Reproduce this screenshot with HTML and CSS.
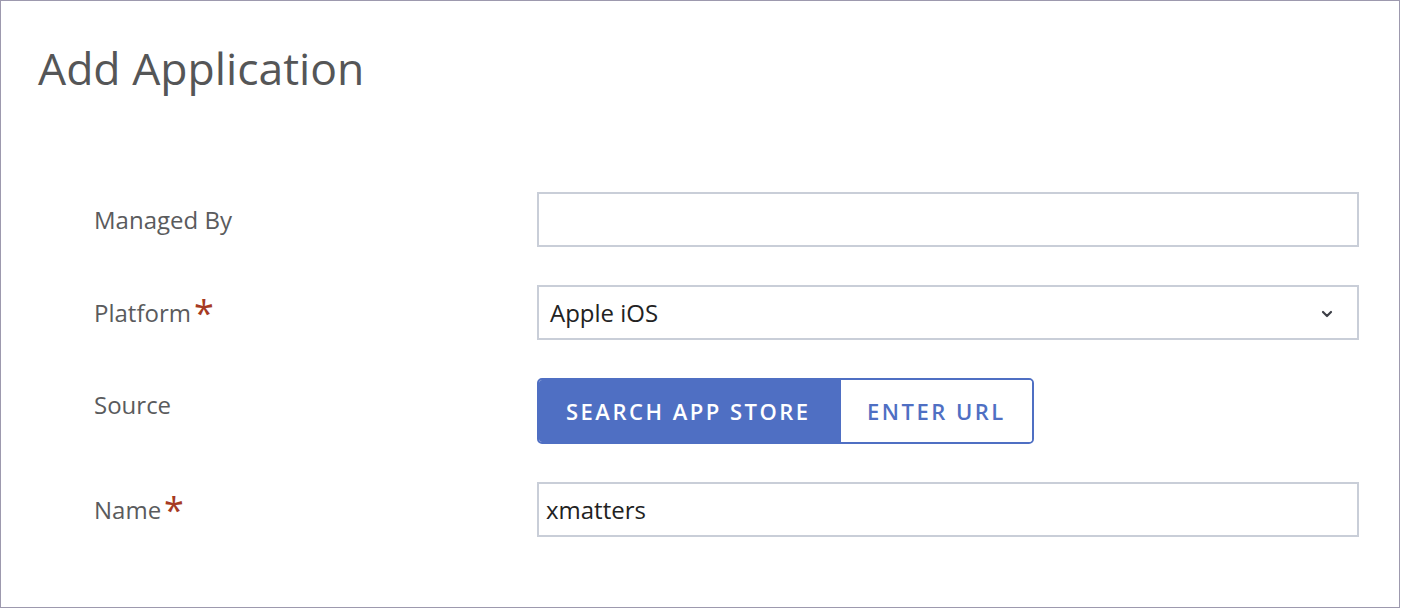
FILE: index.html
```html
<!DOCTYPE html>
<html>
<head>
<meta charset="utf-8">
<link rel="stylesheet" href="styles.css">
</head>
<body>
<div class="frame">
  <h1 class="title">Add Application</h1>
  <form class="form">
    <div class="row">
      <label class="label">Managed By</label>
      <div class="field"><div class="input"></div></div>
    </div>
    <div class="row">
      <label class="label">Platform<span class="req">*</span></label>
      <div class="field">
        <div class="input select">
          <span class="value">Apple iOS</span>
          <svg class="chev" width="12" height="8" viewBox="0 0 12 8"><path d="M2 2 L6 6 L10 2" fill="none" stroke="#3d3f47" stroke-width="2.2" stroke-linecap="round" stroke-linejoin="round"/></svg>
        </div>
      </div>
    </div>
    <div class="row row-source">
      <label class="label">Source</label>
      <div class="field">
        <div class="seg">
          <span class="seg-btn active">SEARCH APP STORE</span>
          <span class="seg-btn">ENTER URL</span>
        </div>
      </div>
    </div>
    <div class="row">
      <label class="label">Name<span class="req">*</span></label>
      <div class="field"><div class="input text"><span class="value">xmatters</span></div></div>
    </div>
  </form>
</div>
</body>
</html>
```

FILE: styles.css
```css
* { box-sizing: border-box; }
html, body { margin: 0; padding: 0; background: #fff; }
body { font-family: "Open Sans", "DejaVu Sans", sans-serif; }
.frame {
  width: 1400px;
  height: 608px;
  border: 1px solid #9d99ae;
  padding: 0 41px 0 37px;
}
.title {
  margin: 0;
  padding-top: 37px;
  font-size: 44.5px;
  line-height: 60px;
  font-weight: 400;
  color: #555657;
}
.form {
  margin-top: 94px;
  padding-left: 56px;
  display: flex;
  flex-direction: column;
  gap: 38px;
}
.row {
  display: grid;
  grid-template-columns: 443px 822px;
  align-items: center;
}
.label {
  font-size: 24px;
  color: #5a5b5d;
  line-height: 30px;
  display: flex;
  align-items: flex-start;
}
.row-source .label { margin-top: -12px; }
.req {
  color: #a63a22;
  font-size: 36px;
  line-height: 28px;
  margin-left: 3px;
  margin-top: 1px;
}
.input {
  height: 55px;
  border: 2px solid #c9ced8;
  background: #fff;
  display: flex;
  align-items: center;
  font-size: 24px;
  color: #222;
}
.select { padding: 0 24px 0 11px; justify-content: space-between; }
.text { padding-left: 7px; }
.value { line-height: 30px; }
.chev { margin-top: 2px; }
.seg {
  display: inline-flex;
  height: 66px;
  border: 2px solid #4f6fc3;
  border-radius: 5px;
  overflow: hidden;
}
.seg-btn {
  display: flex;
  align-items: center;
  padding: 0 26px 0 26px;
  font-size: 22px;
  font-weight: 600;
  letter-spacing: 2.5px;
  color: #4f6fc3;
  background: #fff;
}
.seg-btn.active {
  background: #4f6fc3;
  color: #fff;
  width: 302px;
  padding: 0 27px;
}
```
